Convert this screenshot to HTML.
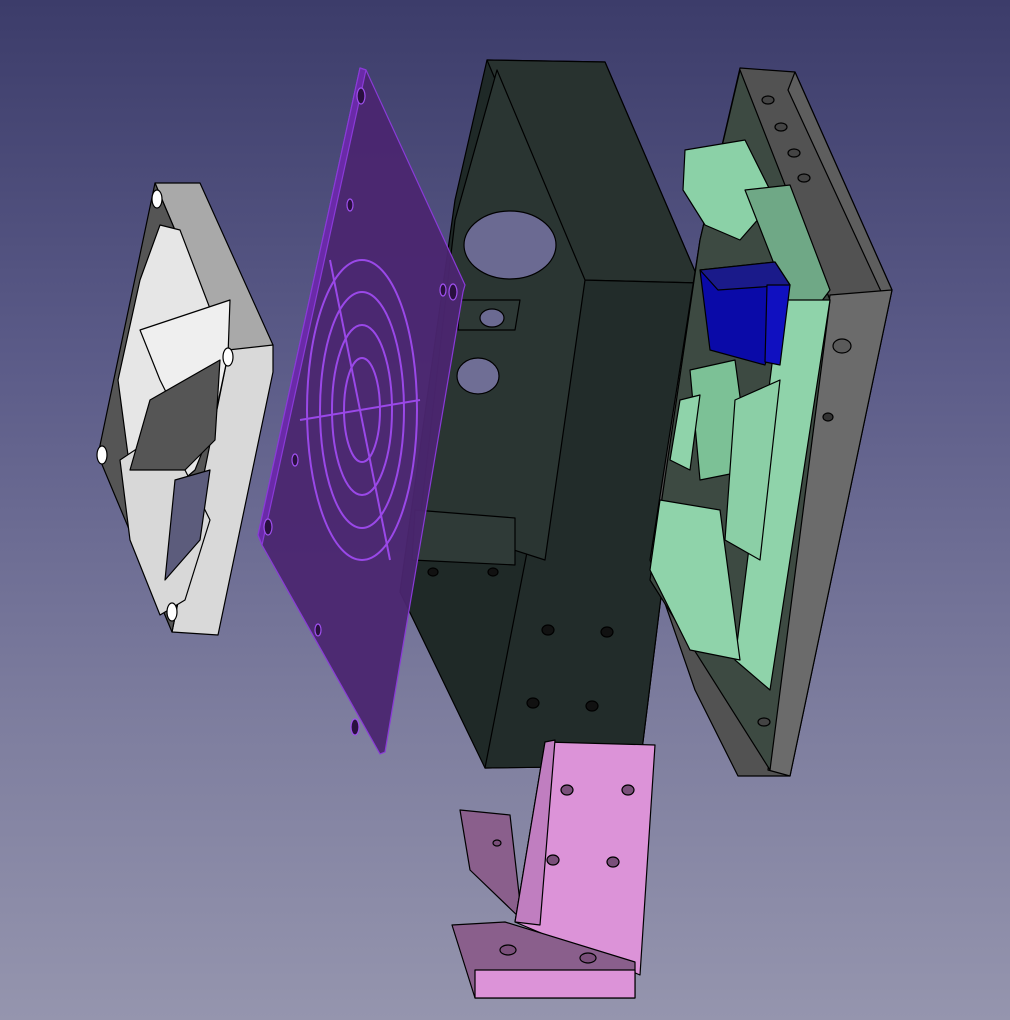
<!DOCTYPE html>
<html><head><style>
html,body{margin:0;padding:0;width:1010px;height:1020px;overflow:hidden}
body{background:linear-gradient(#3c3c6a 0%,#5b5b88 35%,#7d7d9e 70%,#9595ae 100%)}
svg{display:block}
</style></head><body>
<svg width="1010" height="1020" viewBox="0 0 1010 1020" stroke="#000" stroke-width="1.2" stroke-linejoin="round">
<!-- FAN -->
<polygon points="155,183 200,183 273,345 228,355" fill="#a9a9a9"/>
<polygon points="228,350 273,345 273,372 218,635 172,632" fill="#d9d9d9"/>
<polygon points="155,183 228,355 172,632 98,455" fill="#555"/>
<polygon points="160,225 180,230 222,340 215,420 195,470 160,500 130,470 118,380 140,280" fill="#e6e6e6"/>
<polygon points="120,460 150,440 185,470 210,520 185,600 160,615 130,540" fill="#d8d8d8"/>
<polygon points="140,330 230,300 228,355 210,440 180,420 160,380" fill="#efefef"/>
<polygon points="150,400 220,360 215,440 185,470 130,470" fill="#555"/>
<polygon points="175,480 210,470 200,540 165,580" fill="#5c5c7c"/>
<ellipse cx="157" cy="199" rx="5" ry="9" fill="#fff"/>
<ellipse cx="228" cy="357" rx="5" ry="9" fill="#fff"/>
<ellipse cx="102" cy="455" rx="5" ry="9" fill="#fff"/>
<ellipse cx="172" cy="612" rx="5" ry="9" fill="#fff"/>
<!-- BLACK BOX -->
<polygon points="487,60 605,62 700,283 640,766 485,768 400,592 410,520 455,200" fill="#1f2927"/>
<polygon points="487,60 605,62 700,283 580,280" fill="#28322f"/>
<polygon points="580,280 700,283 640,766 485,768" fill="#222c2a"/>
<polygon points="497,70 585,280 545,560 420,520 455,220" fill="#2a3532"/>
<ellipse cx="510" cy="245" rx="46" ry="34" fill="#6b6a92"/>
<ellipse cx="478" cy="376" rx="21" ry="18" fill="#6f6e95"/>
<polygon points="460,300 520,300 515,330 458,330" fill="#2d3835"/>
<ellipse cx="492" cy="318" rx="12" ry="9" fill="#6b6a92"/>
<polygon points="415,510 515,518 515,565 412,560" fill="#2f3a37"/>
<g fill="#111"><ellipse cx="548" cy="630" rx="6" ry="5"/><ellipse cx="607" cy="632" rx="6" ry="5"/><ellipse cx="533" cy="703" rx="6" ry="5"/><ellipse cx="592" cy="706" rx="6" ry="5"/><ellipse cx="493" cy="572" rx="5" ry="4"/><ellipse cx="433" cy="572" rx="5" ry="4"/></g>
<!-- PURPLE PLATE -->
<polygon points="360,68 366,70 465,285 463,292 385,752 380,754 262,545 258,535" fill="#4b2670" fill-opacity="0.95" stroke="#8a3ad8"/>
<polygon points="360,68 258,535 262,545 366,70" fill="#6a2aa8" stroke="#8a3ad8"/>
<g fill="none" stroke="#9a48e8" stroke-width="2">
<ellipse cx="362" cy="410" rx="55" ry="150"/>
<ellipse cx="362" cy="410" rx="42" ry="118"/>
<ellipse cx="362" cy="410" rx="30" ry="85"/>
<ellipse cx="362" cy="410" rx="18" ry="52"/>
<line x1="330" y1="260" x2="390" y2="560"/>
<line x1="300" y1="420" x2="420" y2="400"/>
</g>
<g fill="#2a1040" stroke="#a050f0">
<ellipse cx="361" cy="96" rx="4" ry="8"/><ellipse cx="453" cy="292" rx="4" ry="8"/>
<ellipse cx="268" cy="527" rx="4" ry="8"/><ellipse cx="355" cy="727" rx="4" ry="8"/>
<ellipse cx="350" cy="205" rx="3" ry="6"/><ellipse cx="443" cy="290" rx="3" ry="6"/>
<ellipse cx="295" cy="460" rx="3" ry="6"/><ellipse cx="318" cy="630" rx="3" ry="6"/>
</g>
<!-- PCB -->
<polygon points="740,68 795,72 892,290 790,776 738,776 695,690 650,560 700,240" fill="#525252"/>
<polygon points="795,72 892,290 885,300 788,90" fill="#5e5e5e"/>
<polygon points="830,295 892,290 790,776 768,770" fill="#6b6b6b"/>
<polygon points="700,240 740,70 830,300 770,770 650,580" fill="#3d4a42"/>
<polygon points="685,150 745,140 775,200 740,240 705,225 683,190" fill="#8bd1a7"/>
<polygon points="745,190 790,185 830,290 800,330" fill="#6fa886"/>
<polygon points="780,300 830,300 770,690 735,660" fill="#8fd3aa"/>
<polygon points="660,500 720,510 740,660 690,650 650,570" fill="#8fd3aa"/>
<polygon points="690,370 735,360 750,470 700,480" fill="#7cc196"/>
<polygon points="735,400 780,380 760,560 725,540" fill="#8bcfa6"/>
<polygon points="680,400 700,395 690,470 670,460" fill="#8fd3aa"/>
<polygon points="700,270 775,262 790,285 765,365 710,350" fill="#0a0aa8"/>
<polygon points="700,270 775,262 790,285 718,290" fill="#1a1a8a"/>
<polygon points="767,285 790,285 780,365 765,362" fill="#1010c0"/>
<ellipse cx="842" cy="346" rx="9" ry="7" fill="#5a5a5a"/>
<ellipse cx="828" cy="417" rx="5" ry="4" fill="#333"/>
<g fill="#444"><ellipse cx="768" cy="100" rx="6" ry="4"/><ellipse cx="781" cy="127" rx="6" ry="4"/><ellipse cx="794" cy="153" rx="6" ry="4"/><ellipse cx="804" cy="178" rx="6" ry="4"/><ellipse cx="764" cy="722" rx="6" ry="4"/></g>
<!-- PINK BRACKET -->
<polygon points="460,810 510,815 522,920 470,870" fill="#8a5f8c"/>
<polygon points="545,742 655,745 640,975 515,922" fill="#dc93d8"/>
<polygon points="545,742 555,740 540,925 515,922" fill="#c07ec0"/>
<polygon points="452,925 505,922 635,962 635,998 475,998" fill="#8a5f8c"/>
<polygon points="475,970 635,970 635,998 475,998" fill="#dc93d8"/>
<g fill="#7a4f7a"><ellipse cx="567" cy="790" rx="6" ry="5"/><ellipse cx="628" cy="790" rx="6" ry="5"/><ellipse cx="553" cy="860" rx="6" ry="5"/><ellipse cx="613" cy="862" rx="6" ry="5"/><ellipse cx="508" cy="950" rx="8" ry="5"/><ellipse cx="588" cy="958" rx="8" ry="5"/><ellipse cx="497" cy="843" rx="4" ry="3"/></g>
</svg>
</body></html>
